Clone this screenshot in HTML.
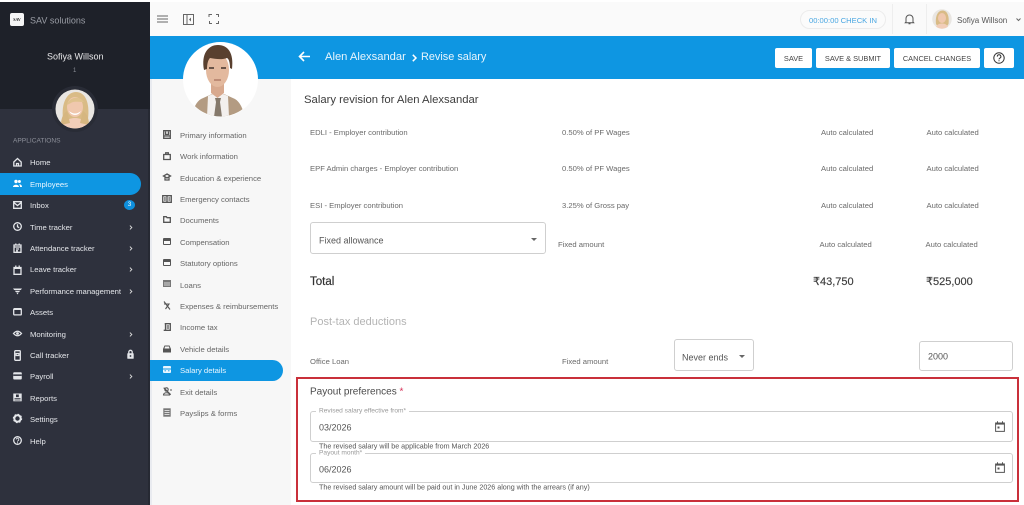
<!DOCTYPE html>
<html><head><meta charset="utf-8">
<style>
*{box-sizing:border-box}
html,body{margin:0;padding:0;width:1024px;height:505px;overflow:hidden;background:#fff;font-family:"Liberation Sans",sans-serif}
#w{position:absolute;left:0;top:0;width:1024px;height:505px;overflow:hidden;filter:blur(.3px)}
.a{position:absolute}
.t{position:absolute;white-space:nowrap;transform:translateY(calc(-50% + .7px));line-height:1.2}
.n{font-size:7.7px;color:#e4e6ea}
.s{font-size:7.7px;color:#666}
.c{font-size:7.65px;color:#6a6a6a}
.b{position:absolute;top:48px;height:20px;background:#fff;border-radius:2px;font-size:7.4px;color:#444;display:flex;align-items:center;justify-content:center}
.box{position:absolute;background:#fff;border:1px solid #cfcfcf;border-radius:3px}
svg{position:absolute;overflow:visible}
.ni{fill:none;stroke:#e4e6ea;stroke-width:1.3}
.si{fill:none;stroke:#555;stroke-width:1.3}
</style></head><body><div id="w">
<div class="a" style="left:0;top:0;width:1024px;height:505px;background:#fff"></div>
<!-- sidebar -->
<div class="a" style="left:0;top:2px;width:150px;height:107px;background:#1e2129"></div>
<div class="a" style="left:0;top:109px;width:150px;height:396px;background:#2e313d"></div>
<div class="a" style="left:148px;top:109px;width:2px;height:396px;background:#262933"></div>
<div class="a" style="left:10px;top:13px;width:14px;height:13px;background:#f5f5f5;border-radius:2px;font:bold 4px 'Liberation Serif',serif;color:#222;text-align:center;line-height:13px">SAV</div>
<div class="t" style="left:30px;top:19.5px;font-size:9px;color:#9a9da5">SAV solutions</div>
<div class="t" style="left:47px;top:55.5px;font-size:9px;color:#e8e8ea">Sofiya Willson</div>
<div class="t" style="left:73px;top:70.5px;font-size:6px;color:#8a8d95">1</div>
<div class="a" style="left:52px;top:86px;width:46px;height:46px;border-radius:50%;background:#292c36"></div>
<svg style="left:55px;top:89px" width="40" height="40" viewBox="0 0 40 40"><defs><clipPath id="f1"><circle cx="20" cy="20" r="19.5"/></clipPath></defs><g clip-path="url(#f1)"><rect width="40" height="40" fill="#e9e6e2"/><path d="M8 30C6 14 12 3 21 3s14 10 12 27l-4 6H12z" fill="#d9bb86"/><ellipse cx="20" cy="18" rx="8" ry="10" fill="#f0c8ae"/><path d="M12 16c2-8 12-10 17-3-5 0-11-1-13 1z" fill="#dfc28e"/><path d="M14 22q6 5 12 0-2 4-6 4t-6-4z" fill="#fff"/><path d="M6 40c2-8 8-11 14-11s12 3 14 11z" fill="#f1cdb8"/><path d="M6 36c0-8 3-12 6-14l3 12zM34 36c0-8-3-12-6-14l-3 12z" fill="#d6b680"/></g></svg>
<div class="t" style="left:13px;top:141px;font-size:6.6px;color:#8d909a">APPLICATIONS</div>
<div class="a" style="left:0;top:173px;width:141px;height:22px;background:#0e96e2;border-radius:0 11px 11px 0"></div>

<svg style="left:13px;top:157px" width="9" height="10" viewBox="0 0 9 10"><path class="ni" d="M.8 5 4.500 1.500 8.200 5v4H.8zM3.500 9V6.500h2V9"/></svg>
<div class="t n" style="left:30px;top:162px">Home</div>
<svg style="left:13px;top:179px" width="9" height="9" viewBox="0 0 9 9"><circle cx="3" cy="2.500" r="1.700" fill="#fff"/><circle cx="6.400" cy="2.500" r="1.500" fill="#fff"/><path d="M0 8c0-3 6-3 6 0zM7 8c0-1-.3-2-1-2.600 2-.4 3 1 3 2.600z" fill="#fff"/></svg>
<div class="t n" style="left:30px;top:183.500px;color:#e9f6ff">Employees</div>
<svg style="left:13px;top:201px" width="9" height="8" viewBox="0 0 9 8"><path class="ni" d="M.7.700h7.600v6.600H.7zM.7 1.500 4.500 4.500 8.300 1.500"/></svg>
<div class="t n" style="left:30px;top:205px">Inbox</div>
<div class="a" style="left:124px;top:200px;width:11px;height:10px;border-radius:50%;background:#0e8fdc;color:#fff;font-size:6px;text-align:center;line-height:10px">3</div>
<svg style="left:13px;top:222px" width="9" height="9" viewBox="0 0 9 9"><circle class="ni" cx="4.500" cy="4.500" r="3.800"/><path class="ni" d="M4.500 2.300v2.400l1.700 1"/></svg>
<div class="t n" style="left:30px;top:226.500px">Time tracker</div>
<svg style="left:13px;top:243px" width="9" height="10" viewBox="0 0 9 10"><path class="ni" d="M1 2h7v7.300H1zM1 4h7M2.800.5v2M6.200.5v2M3 6h3M3 7.800h2"/></svg>
<div class="t n" style="left:30px;top:248px">Attendance tracker</div>
<svg style="left:13px;top:265px" width="9" height="10" viewBox="0 0 9 10"><path class="ni" d="M1 2.500h7v6.800H1zM2.800.5v2M6.200.5v2"/><rect x="1" y="2" width="7" height="2" fill="#e4e6ea"/></svg>
<div class="t n" style="left:30px;top:269px">Leave tracker</div>
<svg style="left:13px;top:287px" width="9" height="8" viewBox="0 0 9 8"><path d="M0 1.500h9L7.800 3H1.200zM1.800 3.700h5.400L6.200 5H2.800zM3.200 5.500h2.600L4.500 7.500z" fill="#e4e6ea"/></svg>
<div class="t n" style="left:30px;top:290.500px">Performance management</div>
<svg style="left:13px;top:308px" width="9" height="8" viewBox="0 0 9 8"><rect class="ni" x=".7" y=".7" width="7.600" height="6.200" rx=".8"/><rect x=".7" y=".7" width="7.600" height="1.300" fill="#e4e6ea"/></svg>
<div class="t n" style="left:30px;top:312px">Assets</div>
<svg style="left:13px;top:330px" width="9" height="7" viewBox="0 0 9 7"><path class="ni" d="M.5 3.500Q4.500-1 8.500 3.500 4.500 8 .5 3.500z"/><circle cx="4.500" cy="3.500" r="1.400" fill="#e4e6ea"/></svg>
<div class="t n" style="left:30px;top:333.500px">Monitoring</div>
<svg style="left:14px;top:350px" width="7" height="11" viewBox="0 0 7 11"><rect class="ni" x=".7" y=".7" width="5.600" height="9.600" rx=".8"/><path class="ni" d="M2 3.500h3v2H2z"/></svg>
<div class="t n" style="left:30px;top:355px">Call tracker</div>
<svg style="left:127px;top:350px" width="7" height="9" viewBox="0 0 7 9"><path class="ni" d="M1.800 3.500V2a1.700 1.700 0 0 1 3.400 0v1.500"/><rect x=".3" y="3.300" width="6.400" height="5.400" rx=".6" fill="#e4e6ea"/><circle cx="3.500" cy="6" r=".9" fill="#2e313d"/></svg>
<svg style="left:13px;top:372px" width="9" height="8" viewBox="0 0 9 8"><rect x=".2" y=".3" width="8.600" height="7.200" rx="1" fill="#e4e6ea"/><rect x=".2" y="2.400" width="8.600" height="1.500" fill="#2e313d"/></svg>
<div class="t n" style="left:30px;top:376px">Payroll</div>
<svg style="left:13px;top:393px" width="9" height="9" viewBox="0 0 9 9"><rect x=".3" y=".5" width="8.400" height="7.800" fill="#e4e6ea"/><rect x="3" y="1.500" width="2.800" height="2.600" fill="#2e313d"/><path d="M1.500 5.500h6M1.500 7h6" stroke="#2e313d" stroke-width=".7"/></svg>
<div class="t n" style="left:30px;top:397.500px">Reports</div>
<svg style="left:13px;top:414px" width="9" height="9" viewBox="0 0 9 9"><circle cx="4.500" cy="4.500" r="3.200" fill="none" stroke="#e4e6ea" stroke-width="2"/><circle cx="4.500" cy="4.500" r="4.200" fill="none" stroke="#e4e6ea" stroke-width="1" stroke-dasharray="1.600 1.700"/></svg>
<div class="t n" style="left:30px;top:419px">Settings</div>
<svg style="left:13px;top:436px" width="9" height="9" viewBox="0 0 9 9"><circle class="ni" cx="4.500" cy="4.500" r="3.800"/><path d="M3.200 3.500a1.300 1.300 0 1 1 2 1.100c-.5.300-.7.500-.7 1M4.500 6.300v.9" fill="none" stroke="#e4e6ea" stroke-width=".9"/></svg>
<div class="t n" style="left:30px;top:440.500px">Help</div>
<svg style="left:129px;top:224.500px" width="4" height="5" viewBox="0 0 4 6"><path d="M.7.700 3 3 .7 5.300" fill="none" stroke="#ddd" stroke-width="1.100"/></svg>
<svg style="left:129px;top:245.500px" width="4" height="5" viewBox="0 0 4 6"><path d="M.7.700 3 3 .7 5.300" fill="none" stroke="#ddd" stroke-width="1.100"/></svg>
<svg style="left:129px;top:267px" width="4" height="5" viewBox="0 0 4 6"><path d="M.7.700 3 3 .7 5.300" fill="none" stroke="#ddd" stroke-width="1.100"/></svg>
<svg style="left:129px;top:288.500px" width="4" height="5" viewBox="0 0 4 6"><path d="M.7.700 3 3 .7 5.300" fill="none" stroke="#ddd" stroke-width="1.100"/></svg>
<svg style="left:129px;top:331.500px" width="4" height="5" viewBox="0 0 4 6"><path d="M.7.700 3 3 .7 5.300" fill="none" stroke="#ddd" stroke-width="1.100"/></svg>
<svg style="left:129px;top:374px" width="4" height="5" viewBox="0 0 4 6"><path d="M.7.700 3 3 .7 5.300" fill="none" stroke="#ddd" stroke-width="1.100"/></svg>

<!-- topbar -->
<div class="a" style="left:150px;top:2px;width:874px;height:34px;background:#fafafa"></div>
<svg style="left:157px;top:15px" width="11" height="8" viewBox="0 0 11 8"><path d="M0 1h11M0 4h11M0 7h11" stroke="#666" stroke-width="1"/></svg>
<svg style="left:183px;top:14px" width="11" height="11" viewBox="0 0 11 11"><rect x=".5" y=".5" width="10" height="10" fill="none" stroke="#666"/><path d="M4 .5v10" stroke="#666"/><path d="M8 3.500 6 5.500l2 2z" fill="#666"/></svg>
<svg style="left:209px;top:14px" width="10" height="10" viewBox="0 0 10 10"><path d="M0 3V.5h3M7 .5h2.500V3M9.500 7v2.500H7M3 9.500H.5V7" fill="none" stroke="#666"/></svg>
<div class="a" style="left:800px;top:10px;width:86px;height:19px;border:1px solid #ececec;border-radius:10px;background:#fbfbfb"></div>
<div class="t" style="left:809px;top:19.500px;font-size:7.600px;color:#4aa7e2">00:00:00 CHECK IN</div>
<div class="a" style="left:892px;top:4px;width:1px;height:30px;background:#eee"></div>
<svg style="left:905px;top:14px" width="9" height="11" viewBox="0 0 9 11"><path d="M1 8V4.500a3.500 3.500 0 0 1 7 0V8l.7.800H.3zM3.500 9.800h2" fill="none" stroke="#555" stroke-width="1"/></svg>
<div class="a" style="left:926px;top:4px;width:1px;height:30px;background:#eee"></div>
<svg style="left:932px;top:9px" width="20" height="20" viewBox="0 0 40 40"><defs><clipPath id="f2"><circle cx="20" cy="20" r="19.500"/></clipPath></defs><g clip-path="url(#f2)"><rect width="40" height="40" fill="#e9e6e2"/><path d="M8 30C6 14 12 3 21 3s14 10 12 27l-4 6H12z" fill="#d9bb86"/><ellipse cx="20" cy="18" rx="8" ry="10" fill="#f0c8ae"/><path d="M6 40c2-8 8-11 14-11s12 3 14 11z" fill="#f1cdb8"/></g></svg>
<div class="t" style="left:957px;top:19.500px;font-size:8px;color:#555">Sofiya Willson</div>
<svg style="left:1016px;top:18px" width="5" height="3" viewBox="0 0 5 3"><path d="M.5.500 2.500 2.500 4.500.500" fill="none" stroke="#666"/></svg>

<!-- blue header -->
<div class="a" style="left:150px;top:36px;width:874px;height:43px;background:#0e96e2"></div>
<svg style="left:298px;top:51px" width="12" height="11" viewBox="0 0 12 11"><path d="M12 5.500H1.500M6 1 1.500 5.500 6 10" fill="none" stroke="#fff" stroke-width="1.600"/></svg>
<div class="t" style="left:325px;top:57px;font-size:11.200px;color:#e8f5fd">Alen Alexsandar</div>
<svg style="left:412px;top:53.500px" width="5" height="8" viewBox="0 0 5 8"><path d="M.8.800 4 4 .8 7.200" fill="none" stroke="#fff" stroke-width="1.500"/></svg>
<div class="t" style="left:421px;top:57px;font-size:10.900px;color:#e8f5fd">Revise salary</div>
<div class="b" style="left:775px;width:37px">SAVE</div>
<div class="b" style="left:816px;width:74px">SAVE &amp; SUBMIT</div>
<div class="b" style="left:894px;width:86px">CANCEL CHANGES</div>
<div class="b" style="left:984px;width:30px"></div>
<svg style="left:993px;top:52px" width="12" height="12" viewBox="0 0 12 12"><circle cx="6" cy="6" r="5.200" fill="none" stroke="#333" stroke-width="1"/><path d="M4.300 4.600a1.800 1.800 0 1 1 2.700 1.500c-.7.400-1 .7-1 1.300M6 8.200v1" fill="none" stroke="#333" stroke-width="1"/></svg>

<!-- profile nav -->
<div class="a" style="left:150px;top:79px;width:141px;height:426px;background:#f7f7f7"></div>
<div class="a" style="left:150px;top:79px;width:2px;height:426px;background:#e9ebf0"></div>
<svg style="left:183px;top:42px" width="75" height="75" viewBox="0 0 75 75"><defs><clipPath id="f3"><circle cx="37.500" cy="37.500" r="37"/></clipPath></defs><circle cx="37.500" cy="37.500" r="37.500" fill="#fff"/><g clip-path="url(#f3)"><path d="M9 75c1-8 4-15 9-18l11-5h12l11 5c5 3 8 10 10 18z" fill="#b39b82"/><path d="M24 75l1-21 10-4 10 4 1 21z" fill="#f3f0ee"/><path d="M32 56h6l-1 4 2 15h-8l2-15z" fill="#85796b"/><path d="M28 36h13v15l-6.500 5-6.500-5z" fill="#d8a98e"/><ellipse cx="34.500" cy="28" rx="11.500" ry="17" fill="#e3b99e"/><path d="M21 28C18 12 25 3 35 3c10 0 16 8 14 24l-2-1c0-5-1-9-3-10-5 2-12 1-17 0-2 2-3 6-3 11z" fill="#59402f"/><path d="M26 26h5M38 26h5" stroke="#42332b" stroke-width="1.500"/><path d="M31 38h7" stroke="#a8715e" stroke-width="1.200"/></g></svg>

<div class="a" style="left:150px;top:360px;width:133px;height:21px;background:#0e96e2;border-radius:0 11px 11px 0"></div>
<svg style="left:163px;top:130px" width="8" height="9" viewBox="0 0 8 9"><path class="si" d="M.7.700h6.600v7.600H.7zM.7 6h6.600M2.600 1.500v3h2.800v-3"/></svg>
<div class="t s" style="left:180px;top:134.500px">Primary information</div>
<svg style="left:163px;top:152px" width="8" height="8" viewBox="0 0 8 8"><path class="si" d="M.7 2.500h6.600v5H.7zM2.700 2.500V.8h2.600v1.700"/></svg>
<div class="t s" style="left:180px;top:156px">Work information</div>
<svg style="left:163px;top:173px" width="8" height="8" viewBox="0 0 8 8"><path class="si" d="M4 1 7.500 3 4 5 .5 3zM2 4.500V7h4V4.500"/></svg>
<div class="t s" style="left:180px;top:177.500px">Education &amp; experience</div>
<svg style="left:162px;top:195px" width="10" height="8" viewBox="0 0 10 8"><path class="si" d="M.7.700h8.600v6.600H.7zM5 .7v6.600M2 3h1.800M6.400 3h1.800M2 5h1.800M6.400 5h1.800"/></svg>
<div class="t s" style="left:180px;top:198.500px">Emergency contacts</div>
<svg style="left:163px;top:216px" width="8" height="7" viewBox="0 0 8 7"><path class="si" d="M.7.700h2.600l.8 1h3.200v4.600H.7z"/></svg>
<div class="t s" style="left:180px;top:220px">Documents</div>
<svg style="left:163px;top:238px" width="8" height="7" viewBox="0 0 8 7"><rect x="0" y="0" width="8" height="7" rx="1" fill="#555"/><rect x="1" y="3" width="6" height="3" fill="#f7f7f7"/></svg>
<div class="t s" style="left:180px;top:241.500px">Compensation</div>
<svg style="left:163px;top:259px" width="8" height="7" viewBox="0 0 8 7"><rect x="0" y="0" width="8" height="7" rx="1" fill="#555"/><rect x="1" y="3" width="6" height="3" fill="#f7f7f7"/></svg>
<div class="t s" style="left:180px;top:263px">Statutory options</div>
<svg style="left:163px;top:280px" width="8" height="7" viewBox="0 0 8 7"><rect x="0" y="0" width="8" height="7" fill="#777"/><path d="M1 3h6M1 5h6" stroke="#f7f7f7" stroke-width=".7"/></svg>
<div class="t s" style="left:180px;top:284.500px">Loans</div>
<svg style="left:163px;top:301px" width="8" height="9" viewBox="0 0 8 9"><path d="M1 .5 7 8.500M1 3h5L2.500 8" fill="none" stroke="#555" stroke-width="1.100"/></svg>
<div class="t s" style="left:180px;top:305.500px">Expenses &amp; reimbursements</div>
<svg style="left:163px;top:323px" width="8" height="9" viewBox="0 0 8 9"><path class="si" d="M1.700.7h5.600v6.600H.7M2.500.7v6.600M3.700 3h2.300M3.700 5h2.300"/></svg>
<div class="t s" style="left:180px;top:327px">Income tax</div>
<svg style="left:163px;top:345px" width="8" height="8" viewBox="0 0 8 8"><path d="M1.500.5h5L8 4v3.500H0V4zM2 1.500 1.500 3.500h5L6 1.500z" fill="#555" fill-rule="evenodd"/></svg>
<div class="t s" style="left:180px;top:348.500px">Vehicle details</div>
<svg style="left:163px;top:366px" width="8" height="7" viewBox="0 0 8 7"><rect x="0" y="0" width="8" height="7" rx="1" fill="#e9f6ff"/><path d="M0 3h8" stroke="#0e96e2"/><path d="M1.500 4.800h1.500M5 4.800h1.500" stroke="#0e96e2" stroke-width=".8"/></svg>
<div class="t s" style="left:180px;top:370px;color:#e9f6ff">Salary details</div>
<svg style="left:163px;top:387px" width="9" height="9" viewBox="0 0 9 9"><circle cx="3.500" cy="2.500" r="1.700" fill="none" stroke="#555" stroke-width="1.100"/><path d="M.5 8c0-3 6-3 6 0zM.7.700l7 7M7 3h2" fill="none" stroke="#555" stroke-width="1.100"/></svg>
<div class="t s" style="left:180px;top:391.500px">Exit details</div>
<svg style="left:163px;top:408px" width="8" height="9" viewBox="0 0 8 9"><rect x=".3" y=".3" width="7.400" height="8.400" fill="#777"/><path d="M1.500 2.500h5M1.500 4.500h5M1.500 6.500h5" stroke="#f7f7f7" stroke-width=".8"/></svg>
<div class="t s" style="left:180px;top:412.500px">Payslips &amp; forms</div>

<!-- content -->
<div class="t" style="left:304px;top:99.500px;font-size:11.300px;color:#3d3d3d">Salary revision for Alen Alexsandar</div>
<div class="t c" style="left:310px;top:131.500px">EDLI - Employer contribution</div>
<div class="t c" style="left:310px;top:168px">EPF Admin charges - Employer contribution</div>
<div class="t c" style="left:310px;top:204.500px">ESI - Employer contribution</div>
<div class="t c" style="left:562px;top:131.500px">0.50% of PF Wages</div>
<div class="t c" style="left:562px;top:168px">0.50% of PF Wages</div>
<div class="t c" style="left:562px;top:204.500px">3.25% of Gross pay</div>
<div class="t c" style="left:821px;top:131.500px">Auto calculated</div>
<div class="t c" style="left:821px;top:168px">Auto calculated</div>
<div class="t c" style="left:821px;top:204.500px">Auto calculated</div>
<div class="t c" style="left:926.500px;top:131.500px">Auto calculated</div>
<div class="t c" style="left:926.500px;top:168px">Auto calculated</div>
<div class="t c" style="left:926.500px;top:204.500px">Auto calculated</div>
<div class="box" style="left:310px;top:222px;width:236px;height:32px"></div>
<div class="t" style="left:319px;top:239.500px;font-size:9px;color:#555">Fixed allowance</div>
<svg style="left:531px;top:238px" width="6" height="3" viewBox="0 0 6 3"><path d="M0 0h6L3 3z" fill="#666"/></svg>
<div class="t c" style="left:558px;top:244px">Fixed amount</div>
<div class="t c" style="left:819.500px;top:244px">Auto calculated</div>
<div class="t c" style="left:925.500px;top:244px">Auto calculated</div>
<div class="t" style="left:310px;top:282px;font-size:11.500px;color:#333;-webkit-text-stroke:.2px #333">Total</div>
<div class="t" style="left:813px;top:282px;font-size:11px;color:#3c3c3c;-webkit-text-stroke:.15px #3c3c3c">₹43,750</div>
<div class="t" style="left:926px;top:282px;font-size:11px;color:#3c3c3c;-webkit-text-stroke:.15px #3c3c3c">₹525,000</div>
<div class="t" style="left:310px;top:321.500px;font-size:11px;color:#b4b4b4">Post-tax deductions</div>
<div class="t c" style="left:310px;top:361px">Office Loan</div>
<div class="t c" style="left:562px;top:361px">Fixed amount</div>
<div class="box" style="left:674px;top:339px;width:80px;height:32px"></div>
<div class="t" style="left:682px;top:356.500px;font-size:9px;color:#555">Never ends</div>
<svg style="left:739px;top:355px" width="6" height="3" viewBox="0 0 6 3"><path d="M0 0h6L3 3z" fill="#666"/></svg>
<div class="box" style="left:919px;top:341px;width:94px;height:30px"></div>
<div class="t" style="left:928px;top:356px;font-size:9px;color:#555">2000</div>

<!-- payout box -->
<div class="a" style="left:296px;top:377px;width:723px;height:125px;border:2px solid #c9303a"></div>
<div class="t" style="left:310px;top:392px;font-size:10px;color:#4a4a4a">Payout preferences <span style="color:#d7335a">*</span></div>
<div class="box" style="left:310px;top:411px;width:703px;height:31px"></div>
<div class="t" style="left:316px;top:411px;font-size:6.600px;color:#999;background:#fff;padding:0 3px">Revised salary effective from*</div>
<div class="t" style="left:319px;top:426.500px;font-size:9px;color:#555">03/2026</div>
<div class="t" style="left:319px;top:445.500px;font-size:7.150px;color:#555">The revised salary will be applicable from March 2026</div>
<div class="box" style="left:310px;top:453px;width:703px;height:30px"></div>
<div class="t" style="left:316px;top:453px;font-size:6.600px;color:#999;background:#fff;padding:0 3px">Payout month*</div>
<div class="t" style="left:319px;top:468.500px;font-size:9px;color:#555">06/2026</div>
<div class="t" style="left:319px;top:487px;font-size:7.150px;color:#555">The revised salary amount will be paid out in June 2026 along with the arrears (if any)</div>
<svg style="left:995px;top:421px" width="10" height="11" viewBox="0 0 10 11"><path d="M.6 2h8.800v8.400H.6zM2.500.3v2M7.500.3v2" fill="none" stroke="#555" stroke-width="1"/><rect x=".6" y="1.800" width="8.800" height="1.800" fill="#555"/><rect x="2.500" y="5.500" width="2" height="2" fill="#555"/></svg>
<svg style="left:995px;top:462px" width="10" height="11" viewBox="0 0 10 11"><path d="M.6 2h8.800v8.400H.6zM2.500.3v2M7.500.3v2" fill="none" stroke="#555" stroke-width="1"/><rect x=".6" y="1.800" width="8.800" height="1.800" fill="#555"/><rect x="2.500" y="5.500" width="2" height="2" fill="#555"/></svg>
</div></body></html>
